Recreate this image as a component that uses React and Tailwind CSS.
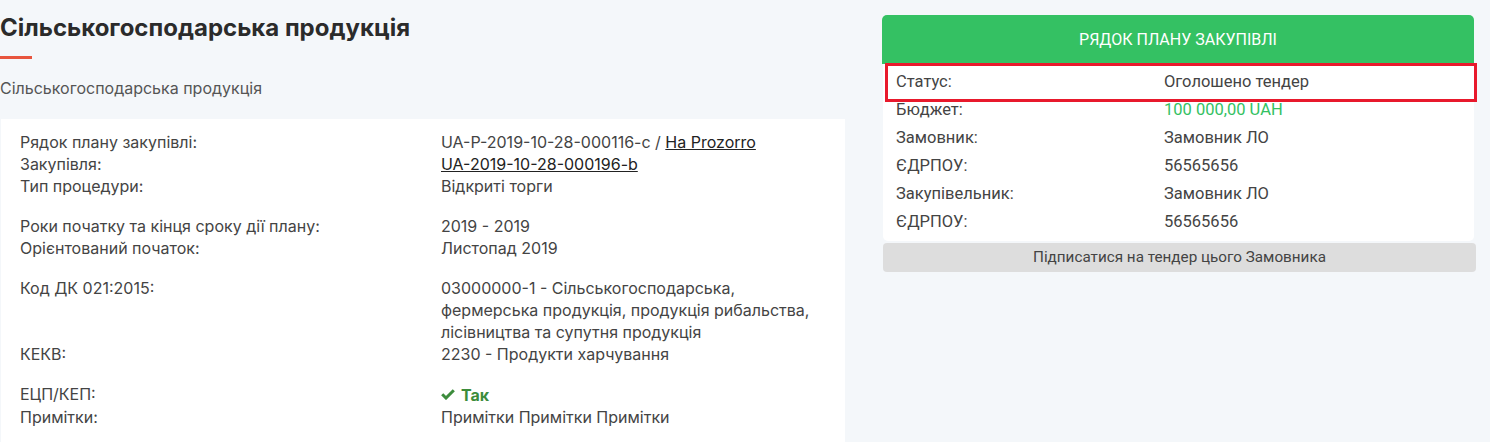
import React from "react";

const Row = ({ label, children, className = "" }) => (
  <div className={"flex " + className}>
    <div className="w-[421px] shrink-0">{label}</div>
    <div className="w-[384px]">{children}</div>
  </div>
);

const Info = ({ label, children, valueClass = "" }) => (
  <div className="flex h-[28px] items-center">
    <div className="w-[268px] shrink-0">{label}</div>
    <div className={valueClass}>{children}</div>
  </div>
);

export default function App() {
  return (
    <div className="w-[1490px] h-[442px] overflow-hidden bg-[#f4f7fa] text-[#444] font-['Roboto',sans-serif] flex">
      <div className="w-[845px] shrink-0 pl-px font-['Inter',sans-serif]">
        <h1 className="mt-[13px] text-[24px] leading-[30px] font-bold text-[#2b2b2b] -ml-px">
          Сільськогосподарська продукція
        </h1>
        <div className="mt-[13px] -ml-px w-[32px] h-[3px] bg-[#e8553e]" />
        <p className="mt-[18px] -ml-px text-[16px] leading-[22px] text-[#555]">
          Сільськогосподарська продукція
        </p>
        <div className="mt-[20px] bg-white px-[19px] pt-[12px] pb-4 text-[16px] leading-[22px] text-[#444] h-[400px]">
          <Row label="Рядок плану закупівлі:">
            UA-P-2019-10-28-000116-c / <span className="underline text-[#222]">На Prozorro</span>
          </Row>
          <Row label="Закупівля:">
            <span className="underline text-[#222]">UA-2019-10-28-000196-b</span>
          </Row>
          <Row label="Тип процедури:">Відкриті торги</Row>
          <Row label="Роки початку та кінця сроку дії плану:" className="mt-[18px]">2019 - 2019</Row>
          <Row label="Орієнтований початок:">Листопад 2019</Row>
          <Row label="Код ДК 021:2015:" className="mt-[18px]">
            03000000-1 - Сільськогосподарська, фермерська продукція, продукція рибальства, лісівництва та супутня продукція
          </Row>
          <Row label="КЕКВ:">2230 - Продукти харчування</Row>
          <Row label="ЕЦП/КЕП:" className="mt-[18px]">
            <span className="inline-flex items-center gap-[6px] font-bold text-[#3c8c3c]">
              <svg width="14" height="11" viewBox="0 0 14 11">
                <path d="M1.2 5.2 L5 9 L12.8 1.2" fill="none" stroke="#3c8c3c" strokeWidth="3" />
              </svg>
              Так
            </span>
          </Row>
          <Row label="Примітки:">Примітки Примітки Примітки</Row>
        </div>
      </div>
      <div className="ml-[37px] w-[594px] pt-[15px]">
        <div className="w-[592px] h-[49px] bg-[#34c163] rounded-t-[5px] flex items-center justify-center text-white text-[16px] uppercase">
          Рядок плану закупівлі
        </div>
        <div className="relative w-[591px] ml-px bg-white rounded-b-[5px] px-[13px] pt-[4px] pb-[5px] text-[16.5px] text-[#444]">
          <div className="absolute left-[2px] top-[-1px] w-[592px] h-[39px] border-[3px] border-[#e8192c]" />
          <Info label="Статус:">Оголошено тендер</Info>
          <Info label="Бюджет:" valueClass="text-[#34c163]">100 000,00 UAH</Info>
          <Info label="Замовник:">Замовник ЛО</Info>
          <Info label="ЄДРПОУ:">56565656</Info>
          <Info label="Закупівельник:">Замовник ЛО</Info>
          <Info label="ЄДРПОУ:">56565656</Info>
        </div>
        <div className="mt-[2px] ml-px w-[593px] h-[29px] rounded-[4px] bg-[#dddddd] flex items-center justify-center text-[15.25px] text-[#444]">
          Підписатися на тендер цього Замовника
        </div>
      </div>
    </div>
  );
}
